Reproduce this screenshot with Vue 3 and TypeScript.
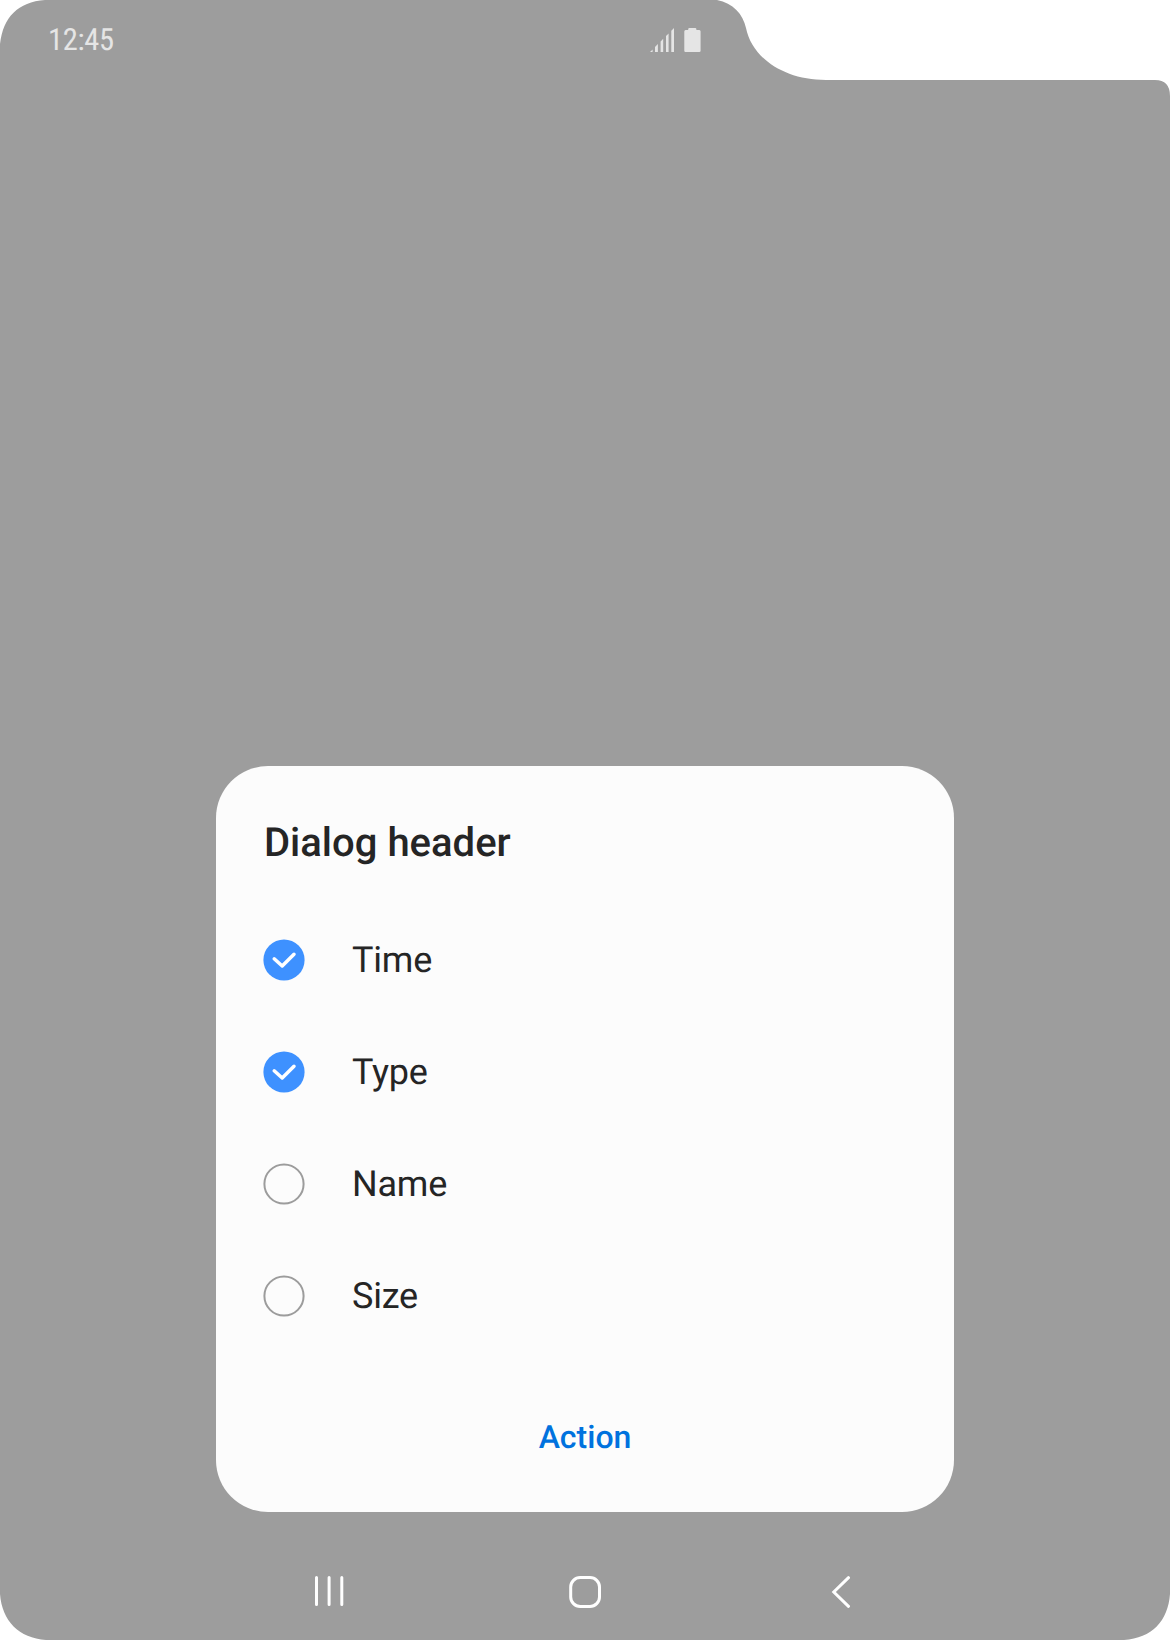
<script setup lang="ts">
import { ref } from 'vue'

interface Option {
  label: string
  checked: boolean
}

const options = ref<Option[]>([
  { label: 'Time', checked: true },
  { label: 'Type', checked: true },
  { label: 'Name', checked: false },
  { label: 'Size', checked: false },
])

function toggle(option: Option): void {
  option.checked = !option.checked
}
</script>

<template>
  <main class="screen">
    <header class="status">
      <time class="clock">12:45</time>
      <svg class="signal" width="24" height="24" viewBox="0 0 24 24">
        <path d="M0 24L2.6 21.4V24ZM5 24V19L7.9 16.1V24ZM10.6 24V13.4L13.2 10.8V24ZM16 24V8L18.6 5.4V24ZM21.3 24V2.7L24 0V24Z" />
      </svg>
      <svg class="battery" width="17" height="24" viewBox="0 0 17 24">
        <path d="M5.4 0H11.2Q12.4 0 12.4 1.2V2H15.3Q16.6 2 16.6 3.5V22.7Q16.6 24 15.3 24H1.5Q.3 24 .3 22.7V3.5Q.3 2 1.6 2H4.2V1.2Q4.2 0 5.4 0Z" />
      </svg>
    </header>

    <section class="dialog" role="dialog">
      <h1 class="title">Dialog header</h1>
      <ul class="options">
        <li v-for="option in options" :key="option.label" class="option" @click="toggle(option)">
          <svg width="42" height="42" viewBox="0 0 42 42">
            <template v-if="option.checked">
              <circle cx="21" cy="21" r="20.6" fill="#3e91ff" />
              <path d="M11.2 19.8L19.2 27L31 15.3" fill="none" stroke="#fff" stroke-width="3.5" stroke-linecap="round" stroke-linejoin="round" />
            </template>
            <circle v-else cx="21" cy="21" r="19.6" fill="none" stroke="#9c9c9c" stroke-width="2" />
          </svg>
          <span>{{ option.label }}</span>
        </li>
      </ul>
      <button class="action" type="button">Action</button>
    </section>

    <nav class="nav">
      <svg width="32" height="32" viewBox="0 0 32 32">
        <path d="M3.5 1.6V28.6M16.1 1.6V28.6M28.8 1.6V28.6" stroke-width="3" />
      </svg>
      <svg width="32" height="32" viewBox="0 0 32 32">
        <rect x="1.7" y="1.6" width="28.8" height="28.8" rx="9.5" stroke-width="3" />
      </svg>
      <svg width="32" height="32" viewBox="0 0 32 32">
        <path d="M23.5 1.7L8.8 16L23.5 30.3" stroke-width="3" />
      </svg>
    </nav>
  </main>
</template>

<style>
body {
  margin: 0;
  background: #fff;
}
</style>

<style scoped>
.screen {
  box-sizing: border-box;
  display: flex;
  flex-direction: column;
  align-items: center;
  width: 1170px;
  height: 1640px;
  background: #9d9d9d;
  font-family: Roboto, sans-serif;
  text-rendering: geometricPrecision;
  clip-path: path('M0 44C3 17 18 2 45 0H717C733 3 743 14 746 28C752 58 784 80 826 80H1155Q1170 80 1170 96V1594C1168 1621 1152 1638 1124 1640H46C19 1638 2 1621 0 1594Z');
}
.status {
  box-sizing: border-box;
  display: flex;
  align-items: center;
  align-self: flex-start;
  width: 701px;
  height: 80px;
  padding-left: 48px;
  color: #e5e5e5;
  fill: #e5e5e5;
}
.clock {
  padding-top: 2px;
  font-family: 'Roboto Condensed', Roboto, sans-serif;
  font-stretch: condensed;
  font-size: 30.5px;
  line-height: 36px;
  letter-spacing: -0.3px;
}
.signal {
  margin-left: auto;
}
.battery {
  margin-left: 10px;
}
.dialog {
  box-sizing: border-box;
  display: flex;
  flex-direction: column;
  width: 738px;
  height: 746px;
  margin-top: 686px;
  padding: 53px 48px 0;
  border-radius: 52px;
  background: #fcfcfc;
  color: #252525;
}
.title {
  margin: 0;
  font-size: 40px;
  font-weight: 500;
  line-height: 48px;
}
.options {
  margin: 37px 0 0;
  padding: 0;
  list-style: none;
}
.option {
  display: flex;
  align-items: center;
  gap: 47px;
  height: 112px;
  font-size: 36px;
  line-height: 44px;
  letter-spacing: -0.2px;
  cursor: pointer;
}
.option svg {
  margin-left: -1px;
}
.action {
  align-self: center;
  margin-top: 53px;
  padding: 12px 32px;
  border: 0;
  background: none;
  color: #0072de;
  font: 500 32px/40px Roboto, sans-serif;
  text-rendering: geometricPrecision;
}
.nav {
  display: flex;
  gap: 224px;
  margin-top: 64px;
  fill: none;
  stroke: #fff;
  stroke-linecap: round;
}
</style>
